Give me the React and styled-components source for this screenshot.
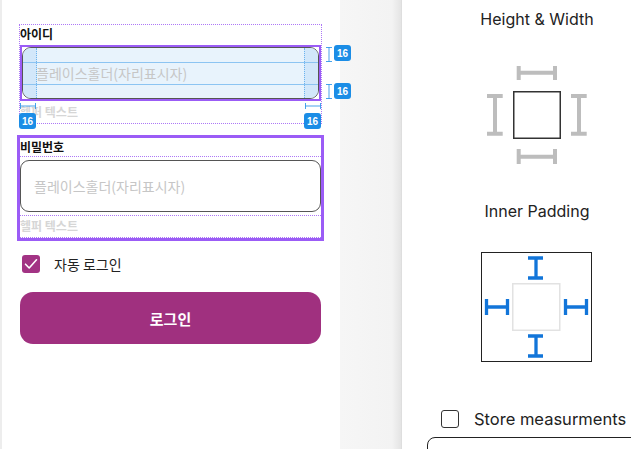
import React from 'react';
import styled, { createGlobalStyle } from 'styled-components';

const GlobalStyle = createGlobalStyle`
  html, body {
    margin: 0;
    padding: 0;
    background: #ffffff;
  }
  * {
    box-sizing: border-box;
  }
`;

const KR = `"Noto Sans CJK KR", "Noto Sans", sans-serif`;

const Screen = styled.div`
  display: flex;
  width: 631px;
  height: 449px;
  overflow: hidden;
  font-family: ${KR};
`;

const LeftPanel = styled.div`
  width: 340px;
  flex-shrink: 0;
  border-left: 2px solid #ededed;
  padding: 24px 0 0 15px;
  display: flex;
  flex-direction: column;
  background: #fff;
`;

const Gutter = styled.div`
  width: 62px;
  flex-shrink: 0;
  background: linear-gradient(to right, #f6f6f6 0%, #f3f3f3 85%, #e4e4e4 100%);
  border-right: 1px solid #dedede;
`;

const RightPanel = styled.div`
  width: 270px;
  min-width: 270px;
  flex-shrink: 0;
  display: flex;
  flex-direction: column;
  align-items: center;
  font-family: Inter, "Noto Sans", sans-serif;
  color: #222;
`;

/* ---------- field with inspector overlay ---------- */

const InspectField = styled.div`
  position: relative;
  margin-left: 2px;
  width: 303px;
  border: 1.5px dotted #ad78f6;
  display: flex;
  flex-direction: column;
`;

const SelectedField = styled.div`
  margin-top: 11px;
  width: 307px;
  border: 3px solid #9b5cf6;
  display: flex;
  flex-direction: column;
`;

const LabelRow = styled.div`
  height: ${p => p.$h || 19}px;
  padding-top: 1px;
  font-size: 12px;
  font-weight: 700;
  color: #111;
  line-height: 16px;
  border-bottom: ${p => (p.$dotted ? '1.5px dotted #ad78f6' : 'none')};
`;

const InputFrame = styled.div`
  position: relative;
  margin: ${p => (p.$inset ? '3px 0 3px 0' : '0')};
  border: ${p => (p.$outlined ? '2px solid #9b5cf6' : 'none')};
`;

const Input = styled.div`
  height: ${p => p.$h}px;
  border: 1px solid #555;
  border-radius: 9px;
  background: ${p => (p.$highlight ? '#e8f3fc' : '#fff')};
  display: flex;
  align-items: center;
  padding-left: 13px;
  font-size: 14px;
  color: #c6c6c6;
  position: relative;
  overflow: hidden;
`;

const PadBand = styled.div`
  position: absolute;
  background: #d2e7fa;
  ${p => p.$side === 'left' && 'left:0;top:0;bottom:0;width:14px;border-right:1px dotted #6cb3ee;'}
  ${p => p.$side === 'right' && 'right:0;top:0;bottom:0;width:14px;border-left:1px dotted #6cb3ee;'}
`;

const PadLine = styled.div`
  position: absolute;
  left: 0;
  right: 0;
  height: 0;
  border-top: 1px solid #8cc4f2;
  top: ${p => p.$top}px;
`;

const PlaceholderText = styled.span`
  position: relative;
  z-index: 1;
`;

const HelperRow = styled.div`
  height: ${p => p.$h || 20}px;
  font-size: 12px;
  font-weight: 700;
  color: #d6d6d6;
  line-height: 16px;
  padding-top: ${p => p.$pt || 4}px;
  border-top: ${p => (p.$dotted ? '1.5px dotted #ad78f6' : 'none')};
  border-bottom: ${p => (p.$dotted ? '1.5px dotted #ad78f6' : 'none')};
`;

const Badge = styled.div`
  position: absolute;
  width: 17px;
  height: 16px;
  border-radius: 3px;
  background: #1b8de6;
  color: #fff;
  font-family: "Liberation Sans", sans-serif;
  font-size: 10px;
  font-weight: 700;
  display: flex;
  align-items: center;
  justify-content: center;
  left: ${p => p.$x}px;
  top: ${p => p.$y}px;
  z-index: 3;
`;

const Marker = styled.svg`
  position: absolute;
  left: ${p => p.$x}px;
  top: ${p => p.$y}px;
  z-index: 2;
  overflow: visible;
`;

/* ---------- checkbox + button ---------- */

const CheckRow = styled.label`
  display: flex;
  align-items: center;
  gap: 14px;
  margin: 13px 0 0 5px;
  font-size: 14px;
  color: #222;
`;

const Check = styled.span`
  width: 18px;
  height: 18px;
  border-radius: 3px;
  background: ${p => (p.$on ? '#a23384' : '#fff')};
  border: ${p => (p.$on ? 'none' : '1.5px solid #333')};
  display: flex;
  align-items: center;
  justify-content: center;
  flex-shrink: 0;
`;

const LoginButton = styled.button`
  margin: 18px 0 0 3px;
  width: 301px;
  height: 52px;
  border: none;
  border-radius: 13px;
  background: #a0307f;
  color: #fff;
  font-family: ${KR};
  font-size: 15px;
  font-weight: 700;
`;

/* ---------- right panel ---------- */

const SectionTitle = styled.div`
  font-size: 16px;
  line-height: 20px;
  white-space: nowrap;
  margin-top: ${p => p.$mt}px;
`;

const Diagram = styled.svg`
  display: block;
  flex-shrink: 0;
  width: ${p => p.$w}px;
  height: ${p => p.$h}px;
  margin-top: ${p => p.$mt}px;
`;

const StoreRow = styled.label`
  display: flex;
  align-items: center;
  gap: 15px;
  margin-top: 46px;
  margin-left: 39px;
  align-self: flex-start;
  font-size: 16.5px;
  white-space: nowrap;
`;

const BottomBox = styled.div`
  align-self: flex-start;
  flex-shrink: 0;
  margin: 8px 0 0 25px;
  width: 260px;
  height: 40px;
  border: 1.5px solid #222;
  border-radius: 8px;
`;

const VBeam = ({ x, y, h, color = '#1b8de6' }) => (
  <Marker $x={x} $y={y} width="8" height={h} viewBox={`0 0 8 ${h}`}>
    <path d={`M1 0.5H7M4 0.5V${h - 0.5}M1 ${h - 0.5}H7`} stroke={color} strokeWidth="1" fill="none" opacity="0.8" />
  </Marker>
);

const HBeam = ({ x, y, w, color = '#1b8de6' }) => (
  <Marker $x={x} $y={y} width={w} height="8" viewBox={`0 0 ${w} 8`}>
    <path d={`M0.5 1V7M0.5 4H${w - 0.5}M${w - 0.5} 1V7`} stroke={color} strokeWidth="1" fill="none" opacity="0.8" />
  </Marker>
);

const CheckMark = () => (
  <svg width="14" height="12" viewBox="0 0 14 12">
    <path d="M1.5 6.2L5.2 10L12.5 1.8" stroke="#fff" strokeWidth="1.6" fill="none" strokeLinecap="round" strokeLinejoin="round" />
  </svg>
);

const SizeIcon = () => (
  <Diagram $mt={35} $w={104} $h={102} viewBox="0 0 104 102">
    <g stroke="#bdbdbd" strokeWidth="4" fill="none">
      <path d="M33.7 2V16M33.7 8.7H70M70 2V16" />
      <path d="M33.7 85V100M33.7 92.7H70M70 85V100" />
      <path d="M2 32H17.7M10 32V69.7M2 69.7H17.7" />
      <path d="M86 32H101.7M94 32V69.7M86 69.7H101.7" />
    </g>
    <rect x="28.75" y="27.75" width="46.5" height="46.5" stroke="#333" strokeWidth="1.5" fill="#fff" />
  </Diagram>
);

const PaddingIcon = () => (
  <Diagram $mt={31} $w={112} $h={111} viewBox="0 0 112 111">
    <rect x="0.5" y="0.5" width="110" height="109" stroke="#222" strokeWidth="1" fill="#fff" />
    <rect x="31.75" y="31.75" width="47" height="46.5" stroke="#e2e2e2" strokeWidth="1.5" fill="#fff" />
    <g stroke="#1275d9" strokeWidth="3.3" fill="none">
      <path d="M47 6H62M55 6V26M47 26H62" />
      <path d="M47 84H62M55 84V104M47 104H62" />
      <path d="M5.5 47V63M5.5 55H26.5M26.5 47V63" />
      <path d="M84.5 47V63M84.5 55H105.5M105.5 47V63" />
    </g>
  </Diagram>
);

const App = () => (
  <>
    <GlobalStyle />
    <Screen>
      <LeftPanel>
        <InspectField>
          <LabelRow $h={20}>아이디</LabelRow>
          <InputFrame $outlined>
            <Input $h={52} $highlight>
              <PadBand $side="left" />
              <PadBand $side="right" />
              <PadLine $top={14} />
              <PadLine $top={36} />
              <PlaceholderText>플레이스홀더(자리표시자)</PlaceholderText>
            </Input>
          </InputFrame>
          <HelperRow $h={22} $pt={3}>헬퍼 텍스트</HelperRow>

          <VBeam x={305} y={22} h={15} />
          <VBeam x={305} y={59} h={15} />
          <Badge $x={314} $y={20}>16</Badge>
          <Badge $x={314} $y={58}>16</Badge>
          <HBeam x={0} y={77} w={16} />
          <HBeam x={285} y={77} w={16} />
          <Badge $x={-1} $y={88}>16</Badge>
          <Badge $x={284} $y={88}>16</Badge>
        </InspectField>

        <SelectedField>
          <LabelRow $h={19} $dotted>비밀번호</LabelRow>
          <InputFrame $inset>
            <Input $h={52}>
              <PlaceholderText>플레이스홀더(자리표시자)</PlaceholderText>
            </Input>
          </InputFrame>
          <HelperRow $h={23} $pt={2} $dotted>헬퍼 텍스트</HelperRow>
        </SelectedField>

        <CheckRow>
          <Check $on>
            <CheckMark />
          </Check>
          자동 로그인
        </CheckRow>

        <LoginButton>로그인</LoginButton>
      </LeftPanel>

      <Gutter />

      <RightPanel>
        <SectionTitle $mt={9}>Height &amp; Width</SectionTitle>
        <SizeIcon />
        <SectionTitle $mt={35}>Inner Padding</SectionTitle>
        <PaddingIcon />
        <StoreRow>
          <Check />
          Store measurments
        </StoreRow>
        <BottomBox />
      </RightPanel>
    </Screen>
  </>
);

export default App;
